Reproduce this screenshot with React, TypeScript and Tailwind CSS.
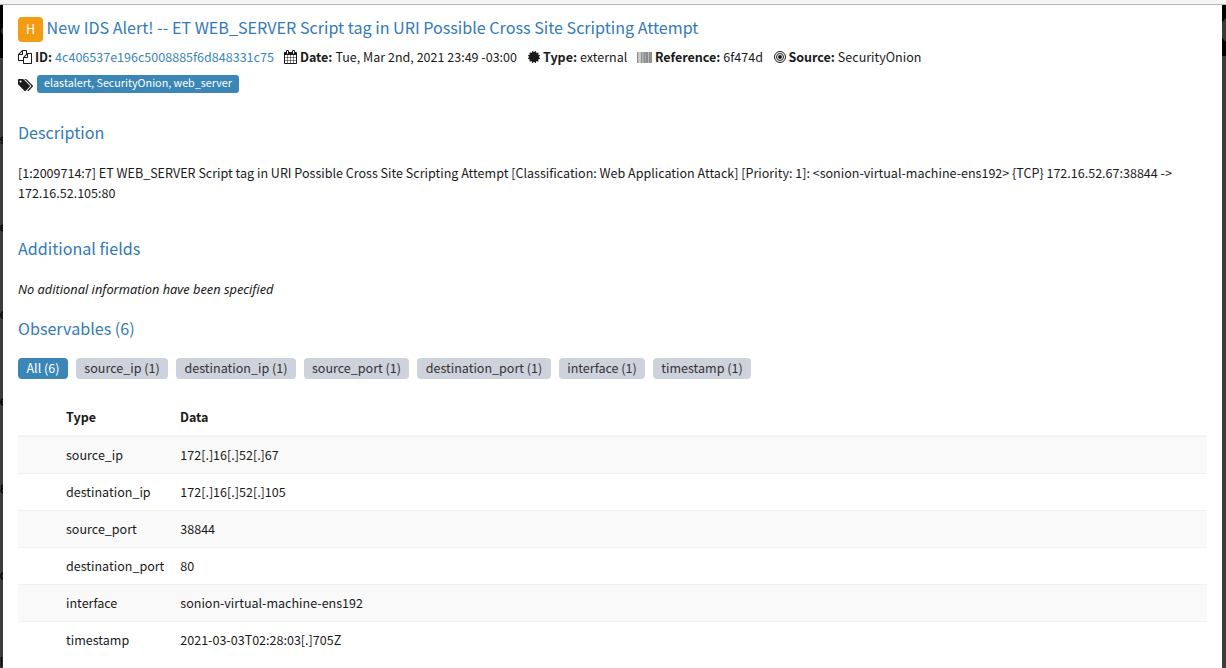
import React from "react";

type IconProps = { box: string; d: string; className: string };

const Icon = ({ box, d, className }: IconProps) => (
  <svg viewBox={box} className={`shrink-0 fill-current ${className}`} aria-hidden="true">
    <path d={d} fillRule="nonzero" />
  </svg>
);

const FILES =
  "M1696 384q40 0 68 28t28 68v1216q0 40-28 68t-68 28h-960q-40 0-68-28t-28-68v-288h-544q-40 0-68-28t-28-68v-672q0-40 20-88t48-76l408-408q28-28 76-48t88-20h416q40 0 68 28t28 68v328q68-40 128-40h416zm-544 213l-299 299h299v-299zm-640-384l-299 299h299v-299zm196 647l316-316v-416h-384v416q0 40-28 68t-68 28h-416v640h512v-256q0-40 20-88t48-76zm956 804v-1152h-384v416q0 40-28 68t-68 28h-416v640h896z";
const CALENDAR =
  "M192 1664h288v-288h-288v288zm352 0h320v-288h-320v288zm-352-352h288v-320h-288v320zm352 0h320v-320h-320v320zm-352-384h288v-288h-288v288zm736 736h320v-288h-320v288zm-384-736h320v-288h-320v288zm768 736h288v-288h-288v288zm-384-352h320v-320h-320v320zm-352-864v-288q0-13-9.5-22.5t-22.5-9.5h-64q-13 0-22.5 9.5t-9.5 22.5v288q0 13 9.5 22.5t22.5 9.5h64q13 0 22.5-9.5t9.5-22.5zm736 864h288v-320h-288v320zm-384-384h320v-288h-320v288zm384 0h288v-288h-288v288zm32-480v-288q0-13-9.5-22.5t-22.5-9.5h-64q-13 0-22.5 9.5t-9.5 22.5v288q0 13 9.5 22.5t22.5 9.5h64q13 0 22.5-9.5t9.5-22.5zm384-64v1280q0 52-38 90t-90 38h-1408q-52 0-90-38t-38-90v-1280q0-52 38-90t90-38h128v-96q0-66 47-113t113-47h64q66 0 113 47t47 113v96h384v-96q0-66 47-113t113-47h64q66 0 113 47t47 113v96h128q52 0 90 38t38 90z";
const CERTIFICATE =
  "M1376 640l138 135q30 28 20 70-12 41-52 51l-188 48 53 186q12 41-19 70-29 31-70 19l-186-53-48 188q-10 40-51 52-12 2-19 2-31 0-51-22l-135-138-135 138q-28 30-70 20-41-11-51-52l-48-188-186 53q-41 12-70-19-31-29-19-70l53-186-188-48q-40-10-52-51-10-42 20-70l138-135-138-135q-30-28-20-70 12-41 52-51l188-48-53-186q-12-41 19-70 29-31 70-19l186 53 48-188q10-41 51-51 41-12 70 19l135 139 135-139q29-30 70-19 41 10 51 51l48 188 186-53q41-12 70 19 31 29 19 70l-53 186 188 48q40 10 52 51 10 42-20 70z";
const BARCODE =
  "M0 0h63v1408h-63zM94 0h32v1408h-32zM189 0h31v1408h-31zM346 0h31v1408h-31zM472 0h62v1408h-62zM629 0h31v1408h-31zM692 0h31v1408h-31zM755 0h31v1408h-31zM880 0h63v1408h-63zM1037 0h63v1408h-63zM1163 0h63v1408h-63zM1289 0h63v1408h-63zM1415 0h31v1408h-31zM1509 0h63v1408h-63zM1603 0h32v1408h-32zM1700 0h92v1408h-92z";
const TAGS =
  "M448 320q0-53-37.500-90.500t-90.500-37.500-90.500 37.500-37.500 90.500 37.500 90.500 90.500 37.500 90.500-37.500 37.500-90.500zm1067 576q0 53-37 90l-491 492q-39 37-91 37-53 0-90-37l-715-716q-38-37-64.500-101t-26.500-117v-416q0-52 38-90t90-38h416q53 0 117 26.500t102 64.500l715 714q37 39 37 91zm384 0q0 53-37 90l-491 492q-39 37-91 37-36 0-59-14t-53-45l470-470q37-37 37-90 0-52-37-91l-715-714q-38-38-102-64.500t-117-26.500h224q53 0 117 26.500t102 64.500l715 714q37 39 37 91z";

const Bullseye = () => (
  <svg viewBox="0 0 1536 1536" className="size-3 shrink-0" aria-hidden="true">
    <circle cx="768" cy="768" r="256" fill="currentColor" />
    <circle cx="768" cy="768" r="448" fill="none" stroke="currentColor" strokeWidth="128" />
    <circle cx="768" cy="768" r="704" fill="none" stroke="currentColor" strokeWidth="128" />
  </svg>
);

type FieldProps = { icon: React.ReactNode; label: string; value: React.ReactNode; className: string; iconWidth?: string };

const Field = ({ icon, label, value, className, iconWidth = "w-4" }: FieldProps) => (
  <div className={`flex shrink-0 items-center ${className}`}>
    <span className={`flex shrink-0 ${iconWidth}`}>{icon}</span>
    <b className="tracking-[-0.03px]">{label}:</b>
    <span className="ml-[3px]">{value}</span>
  </div>
);

const filters = [
  ["source_ip (1)", "w-[92px]"],
  ["destination_ip (1)", "w-[120px]"],
  ["source_port (1)", "w-[105px]"],
  ["destination_port (1)", "w-[134px]"],
  ["interface (1)", "w-[86px]"],
  ["timestamp (1)", "w-[98px]"],
];

const rows = [
  ["source_ip", "172[.]16[.]52[.]67"],
  ["destination_ip", "172[.]16[.]52[.]105"],
  ["source_port", "38844"],
  ["destination_port", "80"],
  ["interface", "sonion-virtual-machine-ens192"],
  ["timestamp", "2021-03-03T02:28:03[.]705Z"],
];

const Heading = ({ children }: { children: React.ReactNode }) => (
  <h4 className="h-5 text-[16.12px] leading-5 whitespace-nowrap text-[#337ab7]">{children}</h4>
);

export default function App() {
  return (
    <div className="flex h-[668px] w-[1226px] flex-col overflow-hidden bg-white font-['Noto_Sans_CJK_SC',sans-serif] text-[12.54px] leading-5 text-[#1a1a1a]">
      <div className="h-1 shrink-0 bg-[#f5f5f5]" />
      <div className="h-px shrink-0 bg-[#b8b8b8]" />
      <div className="flex min-h-0 flex-1">
        <svg viewBox="0 0 3 663" className="h-[663px] w-[3px] shrink-0 bg-[#3d3d3d]" aria-hidden="true">
          <rect width="3" height="53" fill="#000" />
          <circle cx="5" cy="26" r="4" fill="#333" />
          <g fill="none" stroke="#0b0b0b" strokeWidth="1.6">
            <path d="M3 132q-3 1-1.500 3.500h1.500M3 138h-2.500" />
            <path d="M3 220q-2 0-2 3t2 3M1 223h2" />
            <path d="M3 307q-2 0-2 3t2 3M1 310h2" />
            <path d="M3 394q-2 0-2 3t2 3M1 397h2" />
            <path d="M3 480q-2 1-1 3.500q-2 3 1 4.500M1 484h2" />
            <path d="M3 568q-2 0-2 3t2 3" />
            <path d="M1.500 652v10" />
          </g>
        </svg>
        <main className="w-[1219px] shrink-0 px-[15px]">
          <div className="mt-3 flex h-[25px] items-center">
            <span className="flex size-[25px] shrink-0 items-center justify-center rounded-[4px] bg-[#f39c12] pb-px text-[12.54px] text-white">H</span>
            <h1 className="mb-[5px] ml-[3.5px] text-[16.12px] leading-5 whitespace-nowrap text-[#337ab7]">
              New IDS Alert! -- ET WEB_SERVER Script tag in URI Possible Cross Site Scripting Attempt
            </h1>
          </div>

          <div className="mt-[5px] flex h-5 whitespace-nowrap">
            <Field
              className="w-[266px]"
              iconWidth="w-[17px]"
              icon={<Icon box="0 0 1792 1792" d={FILES} className="size-3.5" />}
              label="ID"
              value={<a className="text-[#3a87b7]">4c406537e196c5008885f6d848331c75</a>}
            />
            <Field className="w-[244px]" icon={<Icon box="64 0 1664 1792" d={CALENDAR} className="h-3.5 w-[13px]" />} label="Date" value="Tue, Mar 2nd, 2021 23:49 -03:00" />
            <Field className="w-[109px]" iconWidth="w-[15px]" icon={<Icon box="0 -128 1536 1536" d={CERTIFICATE} className="size-3" />} label="Type" value="external" />
            <Field className="w-[137px]" iconWidth="w-[18px]" icon={<Icon box="0 0 1792 1408" d={BARCODE} className="h-[11px] w-[15px]" />} label="Reference" value="6f474d" />
            <Field className="" iconWidth="w-[14.5px]" icon={<Bullseye />} label="Source" value="SecurityOnion" />
          </div>

          <div className="mt-2 flex h-[18px] items-start">
            <Icon box="0 0 1899 1515" d={TAGS} className="mt-1 h-3 w-[15px]" />
            <span className="ml-1 flex h-[18px] w-[202px] items-center justify-center rounded-[3px] bg-[#3a87b7] pb-[2px] text-[10.75px] whitespace-nowrap text-white">
              elastalert, SecurityOnion, web_server
            </span>
          </div>

          <div className="mt-[29px]">
            <Heading>Description</Heading>
          </div>
          <p className="mt-[21px] h-10 leading-5 whitespace-nowrap">
            [1:2009714:7] ET WEB_SERVER Script tag in URI Possible Cross Site Scripting Attempt [Classification: Web Application Attack] [Priority: 1]: &lt;sonion-virtual-machine-ens192&gt; {"{TCP}"} 172.16.52.67:38844 -&gt;
            <br />
            172.16.52.105:80
          </p>
          <div className="mt-[35px]">
            <Heading>Additional fields</Heading>
          </div>
          <p className="mt-[21px] h-5 font-['Noto_Sans',sans-serif] text-[12.8px] italic">No aditional information have been specified</p>
          <div className="mt-[19px]">
            <Heading>Observables (6)</Heading>
          </div>

          <div className="mt-5 flex h-[21px] gap-2 whitespace-nowrap">
            <span className="flex w-[50px] items-center justify-center rounded-[4px] bg-[#3a87b7] pb-px text-white">All (6)</span>
            {filters.map(([label, width]) => (
              <span key={label} className={`flex items-center justify-center rounded-[4px] bg-[#ced2dc] pb-px text-[#333] ${width}`}>
                {label}
              </span>
            ))}
          </div>

          <div className="mt-5 w-[1189px]">
            <div className="flex h-9 items-center pl-12 font-bold">
              <span className="w-[114px]">Type</span>
              <span>Data</span>
            </div>
            <div className="h-px bg-[#f4f4f4]" />
            {rows.map(([type, data], i) => (
              <div key={type} className={`flex h-[37px] items-center border-t border-[#f2f2f2] pl-12 ${i % 2 === 0 ? "bg-[#f9f9f9]" : "bg-white"}`}>
                <span className="w-[114px] shrink-0">{type}</span>
                <span className="pl-[0.3px]">{data}</span>
              </div>
            ))}
          </div>
        </main>
        <svg viewBox="0 0 4 663" className="h-[663px] w-1 shrink-0 bg-[#3d3d3d]" aria-hidden="true">
          <rect width="4" height="51" fill="#000" />
          <circle cx="13" cy="25" r="15" fill="#3a3a3a" />
        </svg>
      </div>
    </div>
  );
}
